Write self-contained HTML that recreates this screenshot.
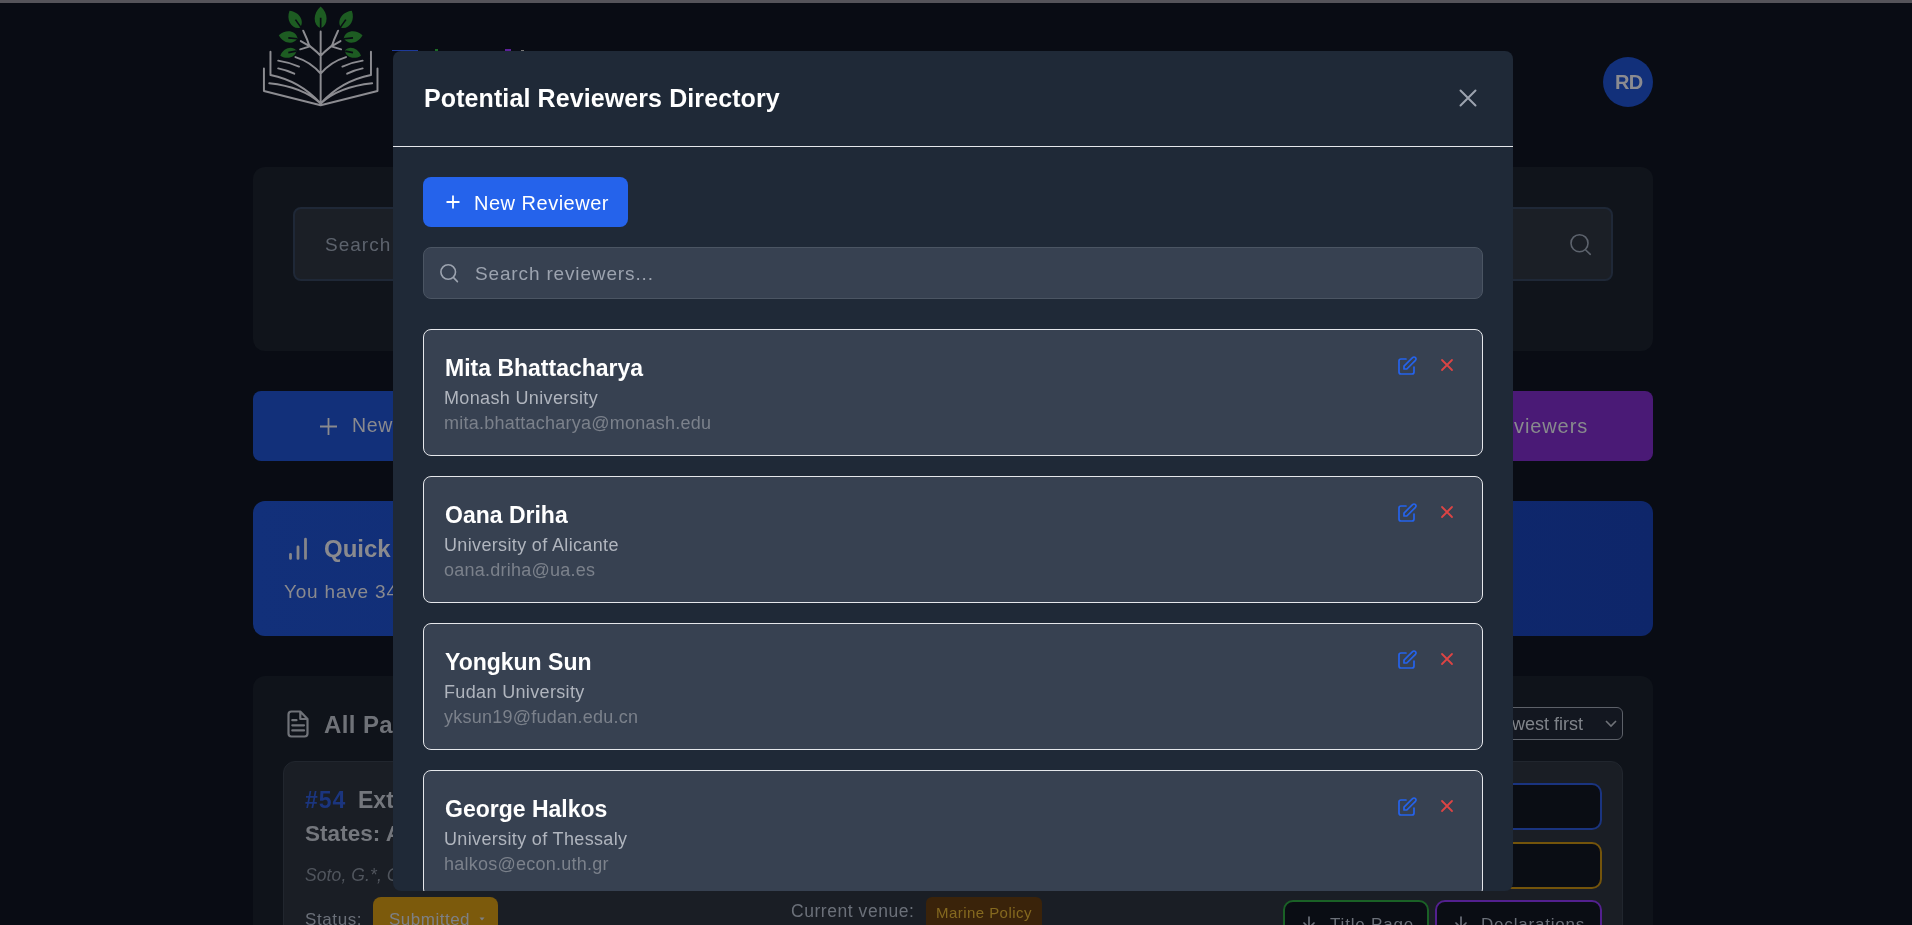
<!DOCTYPE html>
<html><head><meta charset="utf-8"><style>
html,body{margin:0;padding:0;}
body{width:1912px;height:925px;overflow:hidden;position:relative;background:#090c14;font-family:"Liberation Sans",sans-serif;}
.t{position:absolute;white-space:nowrap;line-height:1;-webkit-font-smoothing:antialiased;will-change:transform;}
.r{position:absolute;}
svg{position:absolute;overflow:visible;}
</style></head><body>
<div class="r" style="left:0px;top:0px;width:1912px;height:3px;background:#55545a;border-radius:0px;"></div>
<svg style="left:255px;top:0px" width="130" height="110" viewBox="0 0 1093 925">
<path d="M552,55 C485.3,109.9 485.3,210.5 552,238 C618.7,210.5 618.7,109.9 552,55Z M290,90 C259.5,168.0 307.9,247.2 378,234 C421.7,177.6 373.3,98.4 290,90Z M814,90 C730.7,98.4 682.3,177.6 726,234 C796.1,247.2 844.5,168.0 814,90Z M200,296 C237.0,367.0 323.9,381.3 358,322 C344.7,254.9 257.8,240.6 200,296Z M904,296 C846.2,240.6 759.3,254.9 746,322 C780.1,381.3 867.0,367.0 904,296Z M213,468 C269.7,505.9 343.9,482.3 348,425 C311.6,380.6 237.3,404.3 213,468Z M891,468 C866.7,404.3 792.4,380.6 756,425 C760.1,482.3 834.3,505.9 891,468Z" fill="#1d5c22"/>
<path d="M552,150L552,240M340,165L385,228M764,165L719,228M280,318L355,326M824,318L749,326M280,442L345,430M824,442L759,430" stroke="#090c14" stroke-width="14" fill="none"/>
<path d="M552,265L552,885 M552,470C510,420 470,400 455,380C440,330 420,290 405,258 M455,385L385,345 M455,392L380,415 M552,470C594,420 634,400 649,380C664,330 684,290 699,258 M649,385L719,345 M649,392L724,415 M340,480Q470,520 552,620 M765,480Q634,520 552,620 M195,510Q290,525 370,560 M195,575Q270,590 330,620 M905,510Q810,525 735,560 M905,575Q830,590 775,620 M130,435L130,630Q380,680 552,870 M120,700Q400,730 552,870 M75,575L75,765L552,885 M975,435L975,630Q724,680 552,870 M985,700Q704,730 552,870 M1030,575L1030,765L552,885" stroke="#8c8c91" stroke-width="16.5" fill="none" stroke-linecap="round" stroke-linejoin="round"/>
</svg>
<div class="r" style="left:392px;top:49.5px;width:26px;height:1.5px;background:#1e3a9a;border-radius:0px;"></div>
<div class="r" style="left:435px;top:49px;width:3px;height:2px;background:#1d6b25;border-radius:0px;"></div>
<div class="r" style="left:505px;top:49px;width:6px;height:2px;background:#5b2198;border-radius:0px;"></div>
<div class="r" style="left:521px;top:50px;width:3px;height:1px;background:#777777;border-radius:0px;"></div>
<div class="r" style="left:1603px;top:57px;width:50px;height:50px;background:#12307a;border-radius:25px;"></div>
<div class="t" style="left:1615.3px;top:72.07px;font-size:20px;color:#8b8b90;font-weight:bold;font-style:normal;letter-spacing:-0.8px;">RD</div>
<div class="r" style="left:253px;top:167px;width:1400px;height:184px;background:#10141b;border-radius:12px;"></div>
<div class="r" style="left:293px;top:207px;width:1320px;height:74px;background:#1b1f26;border-radius:8px;border:2px solid #1f2837;box-sizing:border-box;"></div>
<div class="t" style="left:325px;top:234.92px;font-size:19px;color:#5d636d;font-weight:normal;font-style:normal;letter-spacing:1.0px;">Search papers...</div>
<svg style="left:1568px;top:232px" width="24" height="24" viewBox="0 0 24 24" fill="none" stroke="#5d636d" stroke-width="1.6" stroke-linecap="round"><circle cx="11.5" cy="11.2" r="8.5"/><path d="M17.7 18L22.3 22.3"/></svg>
<div class="r" style="left:253px;top:391px;width:687px;height:70px;background:#12307a;border-radius:8px;"></div>
<svg style="left:319px;top:417px" width="19" height="19" viewBox="0 0 19 19" stroke="#8a8a8e" stroke-width="1.8"><path d="M9.5 1V18M1 9.5H18"/></svg>
<div class="t" style="left:351.5px;top:416.49px;font-size:19.5px;color:#8a8a8e;font-weight:normal;font-style:normal;letter-spacing:0.6px;">New Paper</div>
<div class="r" style="left:966px;top:391px;width:687px;height:70px;background:#4a1a76;border-radius:8px;"></div>
<div class="t" style="left:1514px;top:416.07px;font-size:20px;color:#888b8d;font-weight:normal;font-style:normal;letter-spacing:0.9px;">viewers</div>
<div class="r" style="left:253px;top:501px;width:1400px;height:135px;background:linear-gradient(90deg,#12307a,#0e266a);border-radius:12px;"></div>
<svg style="left:280px;top:530px" width="32" height="34" viewBox="0 0 32 34" stroke="#85858a" stroke-width="2.8" stroke-linecap="round"><path d="M10.5 24.3V28.4M18 16.8V28.4M25.5 9.2V28.4"/></svg>
<div class="t" style="left:324px;top:536.68px;font-size:24px;color:#8a8a8e;font-weight:bold;font-style:normal;letter-spacing:0px;">Quick Stats</div>
<div class="t" style="left:284px;top:581.92px;font-size:19px;color:#8a8a8e;font-weight:normal;font-style:normal;letter-spacing:0.8px;">You have 34 papers in progress</div>
<div class="r" style="left:253px;top:676px;width:1400px;height:324px;background:#0f131a;border-radius:12px;"></div>
<svg style="left:285px;top:708px" width="26" height="32" viewBox="0 0 26 32" fill="none" stroke="#707379" stroke-width="2.2" stroke-linecap="round" stroke-linejoin="round"><path d="M15.3 3.5H6.5a3 3 0 0 0-3 3V25.5a3 3 0 0 0 3 3H19.5a3 3 0 0 0 3-3V11ZM15.3 3.5V11H22.5M7.3 12.2H11.5M7.3 17.3H19M7.3 22.4H19"/></svg>
<div class="t" style="left:324px;top:712.68px;font-size:24px;color:#6f7278;font-weight:bold;font-style:normal;letter-spacing:0.4px;">All Papers</div>
<div class="r" style="left:1350px;top:707px;width:273px;height:33px;background:#131720;border-radius:6px;border:1px solid #5d6169;box-sizing:border-box;"></div>
<div class="t" style="left:1489px;top:714.76px;font-size:18px;color:#80848a;font-weight:normal;font-style:normal;letter-spacing:0px;">Newest first</div>
<svg style="left:1604px;top:718px" width="14" height="12" viewBox="0 0 14 12" fill="none" stroke="#6f7278" stroke-width="1.6"><path d="M2 3l5 5 5-5"/></svg>
<div class="r" style="left:283px;top:761px;width:1340px;height:239px;background:#1a1e25;border-radius:12px;border:1px solid #21262e;box-sizing:border-box;"></div>
<div class="t" style="left:304.5px;top:788.53px;font-size:23px;color:#1b357e;font-weight:bold;font-style:normal;letter-spacing:1.0px;">#54</div>
<div class="t" style="left:358px;top:788.53px;font-size:23px;color:#74777d;font-weight:bold;font-style:normal;letter-spacing:0px;">Extended Producer</div>
<div class="t" style="left:305px;top:823.45px;font-size:22.5px;color:#74777d;font-weight:bold;font-style:normal;letter-spacing:0.05px;">States: A</div>
<div class="t" style="left:305px;top:867.19px;font-size:17.5px;color:#50555d;font-weight:normal;font-style:italic;letter-spacing:0.1px;">Soto, G.*, Castro</div>
<div class="t" style="left:305px;top:910.61px;font-size:17px;color:#6b7079;font-weight:normal;font-style:normal;letter-spacing:0.6px;">Status:</div>
<div class="r" style="left:373px;top:897px;width:125px;height:63px;background:#7c5a0c;border-radius:8px;"></div>
<div class="t" style="left:389px;top:910.61px;font-size:17px;color:#7d8087;font-weight:normal;font-style:normal;letter-spacing:0.5px;">Submitted</div>
<svg style="left:478px;top:915px" width="8" height="8" viewBox="0 0 8 8"><path d="M1.5 2.5H6.5L4 5.5Z" fill="#7d8087"/></svg>
<div class="t" style="left:791px;top:903.19px;font-size:17.5px;color:#6b7079;font-weight:normal;font-style:normal;letter-spacing:0.55px;">Current venue:</div>
<div class="r" style="left:926px;top:897px;width:116px;height:63px;background:#3a230a;border-radius:6px;"></div>
<div class="t" style="left:936px;top:905.30px;font-size:15px;color:#85691f;font-weight:normal;font-style:normal;letter-spacing:0.45px;">Marine Policy</div>
<div class="r" style="left:1300px;top:783px;width:302px;height:47px;background:#0a0d14;border-radius:10px;border:2px solid #1a3480;box-sizing:border-box;"></div>
<div class="r" style="left:1300px;top:842px;width:302px;height:47px;background:#0a0d14;border-radius:10px;border:2px solid #74540b;box-sizing:border-box;"></div>
<div class="r" style="left:1283px;top:900px;width:146px;height:60px;background:#0a0d14;border-radius:10px;border:2px solid #1a6126;box-sizing:border-box;"></div>
<div class="r" style="left:1435px;top:900px;width:167px;height:60px;background:#0a0d14;border-radius:10px;border:2px solid #53208f;box-sizing:border-box;"></div>
<div class="t" style="left:1330px;top:915.61px;font-size:17px;color:#6b7079;font-weight:normal;font-style:normal;letter-spacing:0.8px;">Title Page</div>
<svg style="left:1301px;top:914px" width="16" height="20" viewBox="0 0 16 20" fill="none" stroke="#6b7079" stroke-width="1.7" stroke-linecap="round"><path d="M8 3V14M3 9L8 14L13 9"/></svg>
<svg style="left:1453px;top:914px" width="16" height="20" viewBox="0 0 16 20" fill="none" stroke="#6b7079" stroke-width="1.7" stroke-linecap="round"><path d="M8 3V14M3 9L8 14L13 9"/></svg>
<div class="t" style="left:1481px;top:915.61px;font-size:17px;color:#6b7079;font-weight:normal;font-style:normal;letter-spacing:0.8px;">Declarations</div>
<div class="r" style="left:393px;top:51px;width:1120px;height:840px;background:#1f2937;border-radius:8px;overflow:hidden">
<div class="r" style="left:0px;top:95px;width:1120px;height:1px;background:#e5e7eb;border-radius:0px;"></div>
<div class="t" style="left:31px;top:34.84px;font-size:25px;color:#ffffff;font-weight:bold;font-style:normal;letter-spacing:0.1px;">Potential Reviewers Directory</div>
<svg style="left:1059px;top:31px" width="32" height="32" viewBox="0 0 32 32" stroke="#9ca3af" stroke-width="2" stroke-linecap="round"><path d="M8.5 8.5L23.5 23.5M23.5 8.5L8.5 23.5"/></svg>
<div class="r" style="left:30px;top:126px;width:205px;height:50px;background:#2563eb;border-radius:8px;"></div>
<svg style="left:53px;top:144px" width="14" height="14" viewBox="0 0 14 14" stroke="#ffffff" stroke-width="1.8"><path d="M7 0.5V13.5M0.5 7H13.5"/></svg>
<div class="t" style="left:81px;top:141.57px;font-size:20px;color:#ffffff;font-weight:normal;font-style:normal;letter-spacing:0.5px;">New Reviewer</div>
<div class="r" style="left:30px;top:196px;width:1060px;height:52px;background:#374151;border-radius:8px;border:1px solid #4b5563;box-sizing:border-box;"></div>
<svg style="left:47px;top:212px" width="24" height="24" viewBox="0 0 24 24" fill="none" stroke="#9ca3af" stroke-width="1.6" stroke-linecap="round"><circle cx="8.2" cy="9" r="7.3"/><path d="M13.6 14.6L17.4 18.6"/></svg>
<div class="t" style="left:82px;top:213.42px;font-size:19px;color:#9ca3af;font-weight:normal;font-style:normal;letter-spacing:0.85px;">Search reviewers...</div>
<div class="r" style="left:30px;top:278px;width:1060px;height:127px;background:#374151;border-radius:8px;border:1px solid #e5e7eb;box-sizing:border-box;"></div>
<div class="t" style="left:51.5px;top:305.53px;font-size:23px;color:#ffffff;font-weight:bold;font-style:normal;letter-spacing:0px;">Mita Bhattacharya</div>
<div class="t" style="left:51px;top:337.76px;font-size:18px;color:#b0b5be;font-weight:normal;font-style:normal;letter-spacing:0.35px;">Monash University</div>
<div class="t" style="left:51px;top:362.76px;font-size:18px;color:#7b818b;font-weight:normal;font-style:normal;letter-spacing:0.24px;">mita.bhattacharya@monash.edu</div>
<svg style="left:1002px;top:302.5px" width="24" height="24" viewBox="0 0 24 24" fill="none" stroke="#2563eb" stroke-width="1.7" stroke-linecap="round" stroke-linejoin="round"><path d="M11 5H6a2 2 0 00-2 2v11a2 2 0 002 2h11a2 2 0 002-2v-5m-1.414-9.414a2 2 0 112.828 2.828L11.828 15H9v-2.828l8.586-8.586z"/></svg>
<svg style="left:1044px;top:304px" width="20" height="20" viewBox="0 0 20 20" fill="none" stroke="#dc4444" stroke-width="1.8" stroke-linecap="round"><path d="M5 5L15 15M15 5L5 15"/></svg>
<div class="r" style="left:30px;top:425px;width:1060px;height:127px;background:#374151;border-radius:8px;border:1px solid #e5e7eb;box-sizing:border-box;"></div>
<div class="t" style="left:51.5px;top:452.53px;font-size:23px;color:#ffffff;font-weight:bold;font-style:normal;letter-spacing:0px;">Oana Driha</div>
<div class="t" style="left:51px;top:484.76px;font-size:18px;color:#b0b5be;font-weight:normal;font-style:normal;letter-spacing:0.35px;">University of Alicante</div>
<div class="t" style="left:51px;top:509.76px;font-size:18px;color:#7b818b;font-weight:normal;font-style:normal;letter-spacing:0.24px;">oana.driha@ua.es</div>
<svg style="left:1002px;top:449.5px" width="24" height="24" viewBox="0 0 24 24" fill="none" stroke="#2563eb" stroke-width="1.7" stroke-linecap="round" stroke-linejoin="round"><path d="M11 5H6a2 2 0 00-2 2v11a2 2 0 002 2h11a2 2 0 002-2v-5m-1.414-9.414a2 2 0 112.828 2.828L11.828 15H9v-2.828l8.586-8.586z"/></svg>
<svg style="left:1044px;top:451px" width="20" height="20" viewBox="0 0 20 20" fill="none" stroke="#dc4444" stroke-width="1.8" stroke-linecap="round"><path d="M5 5L15 15M15 5L5 15"/></svg>
<div class="r" style="left:30px;top:572px;width:1060px;height:127px;background:#374151;border-radius:8px;border:1px solid #e5e7eb;box-sizing:border-box;"></div>
<div class="t" style="left:51.5px;top:599.53px;font-size:23px;color:#ffffff;font-weight:bold;font-style:normal;letter-spacing:0px;">Yongkun Sun</div>
<div class="t" style="left:51px;top:631.76px;font-size:18px;color:#b0b5be;font-weight:normal;font-style:normal;letter-spacing:0.35px;">Fudan University</div>
<div class="t" style="left:51px;top:656.76px;font-size:18px;color:#7b818b;font-weight:normal;font-style:normal;letter-spacing:0.24px;">yksun19@fudan.edu.cn</div>
<svg style="left:1002px;top:596.5px" width="24" height="24" viewBox="0 0 24 24" fill="none" stroke="#2563eb" stroke-width="1.7" stroke-linecap="round" stroke-linejoin="round"><path d="M11 5H6a2 2 0 00-2 2v11a2 2 0 002 2h11a2 2 0 002-2v-5m-1.414-9.414a2 2 0 112.828 2.828L11.828 15H9v-2.828l8.586-8.586z"/></svg>
<svg style="left:1044px;top:598px" width="20" height="20" viewBox="0 0 20 20" fill="none" stroke="#dc4444" stroke-width="1.8" stroke-linecap="round"><path d="M5 5L15 15M15 5L5 15"/></svg>
<div class="r" style="left:30px;top:719px;width:1060px;height:127px;background:#374151;border-radius:8px;border:1px solid #e5e7eb;box-sizing:border-box;"></div>
<div class="t" style="left:51.5px;top:746.53px;font-size:23px;color:#ffffff;font-weight:bold;font-style:normal;letter-spacing:0px;">George Halkos</div>
<div class="t" style="left:51px;top:778.76px;font-size:18px;color:#b0b5be;font-weight:normal;font-style:normal;letter-spacing:0.35px;">University of Thessaly</div>
<div class="t" style="left:51px;top:803.76px;font-size:18px;color:#7b818b;font-weight:normal;font-style:normal;letter-spacing:0.24px;">halkos@econ.uth.gr</div>
<svg style="left:1002px;top:743.5px" width="24" height="24" viewBox="0 0 24 24" fill="none" stroke="#2563eb" stroke-width="1.7" stroke-linecap="round" stroke-linejoin="round"><path d="M11 5H6a2 2 0 00-2 2v11a2 2 0 002 2h11a2 2 0 002-2v-5m-1.414-9.414a2 2 0 112.828 2.828L11.828 15H9v-2.828l8.586-8.586z"/></svg>
<svg style="left:1044px;top:745px" width="20" height="20" viewBox="0 0 20 20" fill="none" stroke="#dc4444" stroke-width="1.8" stroke-linecap="round"><path d="M5 5L15 15M15 5L5 15"/></svg>
</div>
</body></html>
